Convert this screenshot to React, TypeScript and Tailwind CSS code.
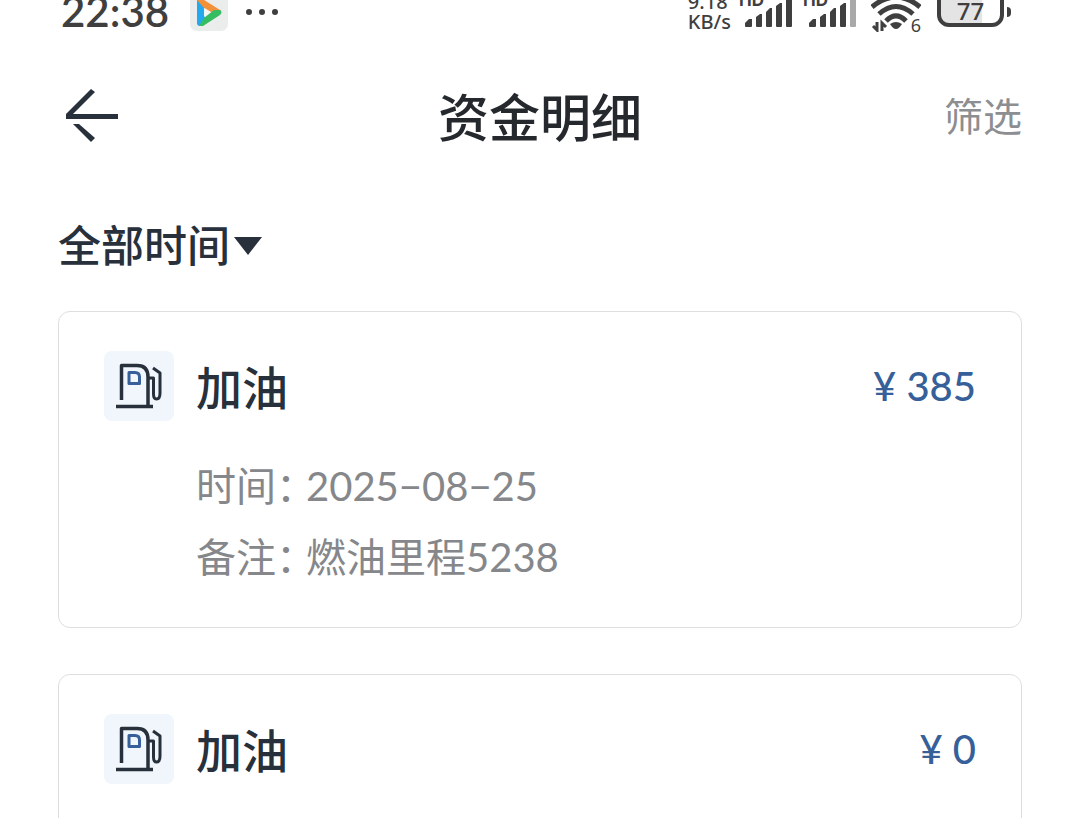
type Entry = {
  id: number
  title: string
  amount: string
  date: string
  note: string
}

const ENTRIES: Entry[] = [
  { id: 1, title: '加油', amount: '385', date: '2025−08−25', note: '燃油里程5238' },
  { id: 2, title: '加油', amount: '0', date: '2025−08−25', note: '' },
]

function PlayerIcon() {
  return (
    <svg className="h-10 w-10" viewBox="0 0 40 40" aria-hidden="true">
      <rect x="1" y="0" width="38" height="39" rx="7" fill="#ebecec" />
      <path d="M8 5 L15 10 L16 26 L11 34 Q8 34 8 31 Z" fill="#25a9ee" />
      <path d="M8 8 Q9 4 12 6 L31 18 Q33 20 31 22 L23 21 L14 15 Z" fill="#f2913a" />
      <path d="M10 34 L15 26 L25 18 L31 18 Q34 20 31 23 L14 34 Z" fill="#36bd62" />
      <path d="M15 16 L22 20 L15 25 Z" fill="#f3f7f6" />
    </svg>
  )
}

function Signal({ weak = false }: { weak?: boolean }) {
  return (
    <div className="relative h-8 w-14">
      <svg className="h-8 w-14" viewBox="0 0 56 32" fill="#3f3f3f" aria-hidden="true">
        <path d="M6 30 V27 L10 23 H13 V30 Q13 31 12 31 H7 Q6 31 6 30 Z" />
        <path d="M17 30 V21 L21 18 H23 V30 Q23 31 22 31 H18 Q17 31 17 30 Z" />
        <path d="M27 30 V16 L31 12 H33 V30 Q33 31 32 31 H28 Q27 31 27 30 Z" />
        <path d="M37 30 V10 L41 7 H43 V30 Q43 31 42 31 H38 Q37 31 37 30 Z" />
        <path d="M47 30 V2 H53 V30 Q53 31 52 31 H48 Q47 31 47 30 Z" fill={weak ? '#a9a9a9' : '#3f3f3f'} />
      </svg>
      <span className="absolute -top-1 left-0 font-['Inter',sans-serif] text-[17px] leading-4 font-bold">HD</span>
    </div>
  )
}

function WifiIcon() {
  return (
    <svg className="h-9 w-[50px]" viewBox="0 0 50 36" fill="none" stroke="#3f3f3f" aria-hidden="true">
      <path d="M1 11 Q25 -9 49 11" strokeWidth="5" />
      <path d="M8 18 Q25 3 42 18" strokeWidth="5" />
      <path d="M15 25 Q25 15 35 25" strokeWidth="5" />
      <path d="M19 28 Q25 24 31 28 Q28 33 25 33 Q22 33 19 28 Z" fill="#3f3f3f" stroke="none" />
      <path d="M6 26 V34 L2 30 M11 35 V27 L15 31" strokeWidth="3" />
    </svg>
  )
}

function StatusBar() {
  return (
    <div className="flex h-[34px] items-end justify-between overflow-hidden pr-[11px] pl-[3px] font-['Lato','Noto_Sans_CJK_SC',sans-serif] text-[#3f3f3f]">
      <div className="flex items-end">
        <span className="text-[42px] leading-[46px] font-semibold">22:38</span>
        <div className="ml-5 pb-[2px]">
          <PlayerIcon />
        </div>
        <svg className="mb-[18px] ml-4 h-2 w-[34px]" viewBox="0 0 34 8" fill="#3f3f3f" aria-hidden="true">
          <circle cx="4" cy="4" r="3" />
          <circle cx="17" cy="4" r="3" />
          <circle cx="30" cy="4" r="3" />
        </svg>
      </div>
      <div className="flex items-end">
        <div className="mr-2 pb-[2px] font-['Noto_Sans',sans-serif] text-[20px] leading-[20px] font-medium">
          <div>9.18</div>
          <div>KB/s</div>
        </div>
        <div className="mr-3 flex gap-2 pb-[6px]">
          <Signal />
          <Signal weak />
        </div>
        <div className="relative mr-4 pb-[2px]">
          <WifiIcon />
          <span className="absolute right-0 bottom-0 bg-white font-['Noto_Sans',sans-serif] text-[18px] leading-[18px]">6</span>
        </div>
        <div className="mb-[7px] flex items-center">
          <div className="flex h-[38px] w-[67px] items-end justify-center rounded-[12px] border-4 border-[#3f3f3f] bg-linear-to-r from-[#e4e4e4] from-70% to-white to-70% font-['Noto_Sans',sans-serif] text-[24px] leading-[25px] font-medium">
            77
          </div>
          <div className="mt-2 ml-[3px] h-[10px] w-1 rounded-r-sm bg-[#3f3f3f]" />
        </div>
      </div>
    </div>
  )
}

function BackIcon() {
  return (
    <svg className="h-14 w-14" viewBox="0 0 56 56" aria-hidden="true">
      <path d="M30 4 L8 26 H53 V31 H1 V26 L26 1 Z" fill="#27303b" />
      <path d="M8 36 H14 L30 50 L26 54 Z" fill="#27303b" />
    </svg>
  )
}

function FuelIcon() {
  return (
    <svg className="h-[70px] w-[70px]" viewBox="0 0 70 70" fill="none" stroke="#27303b" strokeWidth="3.5" strokeLinejoin="round" aria-hidden="true">
      <path d="M17.5 49 V14.5 H33 Q44 14.5 44 26 V55" />
      <path d="M12 55.5 H49" />
      <path d="M45 27 H49.5 V43 Q49.5 48 52.5 48 Q56 48 56 42 V22 L49 17" strokeWidth="3" />
      <path d="M25 21.5 H31 Q35.5 21.5 35.5 26 V32.5 H25 Z" stroke="#375f99" strokeWidth="3" />
    </svg>
  )
}

function EntryCard({ entry }: { entry: Entry }) {
  return (
    <li className="rounded-xl border border-[#dedede] px-[45px] pt-[39px] pb-[34px]">
      <div className="flex items-center">
        <div className="rounded-lg bg-[#f0f6fb]">
          <FuelIcon />
        </div>
        <h2 className="ml-[22px] pt-1 text-[46px] leading-[66px] font-medium text-[#27303b]">{entry.title}</h2>
        <span className="ml-auto text-[40px] leading-[70px] font-medium text-[#375f99]">¥ {entry.amount}</span>
      </div>
      <dl className="mt-[30px] ml-[92px] text-[40px] leading-[71px] text-[#85878b]">
        <div className="flex">
          <dt className="w-[110px] whitespace-nowrap">时间：</dt>
          <dd>{entry.date}</dd>
        </div>
        <div className="flex">
          <dt className="w-[110px] whitespace-nowrap">备注：</dt>
          <dd>{entry.note}</dd>
        </div>
      </dl>
    </li>
  )
}

export default function App() {
  return (
    <div
      lang="zh-CN"
      className="h-screen overflow-hidden bg-white px-[58px] font-['Lato','Noto_Sans_CJK_SC',sans-serif]"
    >
      <StatusBar />
      <header className="mt-[46px] grid grid-cols-[1fr_auto_1fr] items-center">
        <button type="button" aria-label="返回" className="ml-[7px] justify-self-start">
          <BackIcon />
        </button>
        <h1 className="pt-1 text-[51px] leading-[68px] font-medium text-[#25282c]">资金明细</h1>
        <button type="button" className="justify-self-end text-[39px] leading-[72px] text-[#8c8e92]">
          筛选
        </button>
      </header>
      <button type="button" className="mt-[62px] flex items-center gap-[3px] text-[43px] leading-[64px] font-medium text-[#27303b]">
        全部时间
        <svg className="h-[18px] w-[30px]" viewBox="0 0 30 18" aria-hidden="true">
          <path d="M1 0 H29 L15 18 Z" fill="#27303b" />
        </svg>
      </button>
      <ul className="mt-[33px] flex flex-col gap-[46px]">
        {ENTRIES.map((entry) => (
          <EntryCard key={entry.id} entry={entry} />
        ))}
      </ul>
    </div>
  )
}
